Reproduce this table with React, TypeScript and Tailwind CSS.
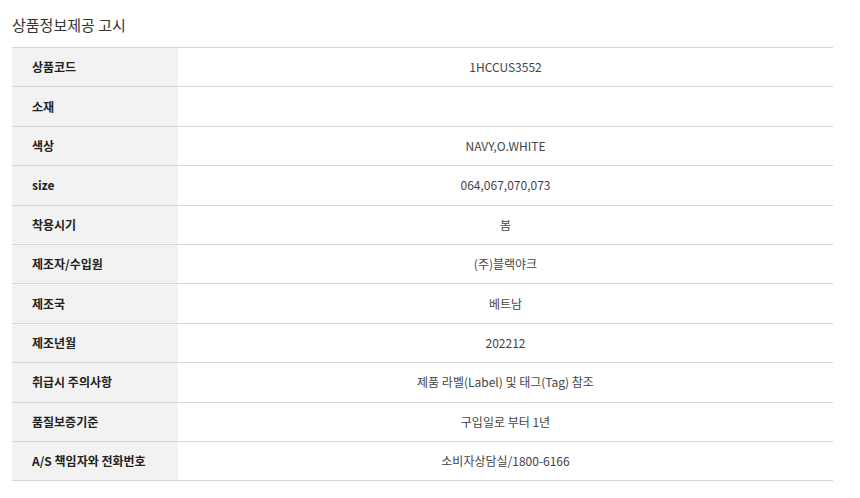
const rows: [string, string][] = [
  ["상품코드", "1HCCUS3552"],
  ["소재", ""],
  ["색상", "NAVY,O.WHITE"],
  ["size", "064,067,070,073"],
  ["착용시기", "봄"],
  ["제조자/수입원", "(주)블랙야크"],
  ["제조국", "베트남"],
  ["제조년월", "202212"],
  ["취급시 주의사항", "제품 라벨(Label) 및 태그(Tag) 참조"],
  ["품질보증기준", "구입일로 부터 1년"],
  ["A/S 책임자와 전화번호", "소비자상담실/1800-6166"],
];

export default function App() {
  return (
    <div
      className="w-[860px] h-[498px] bg-white pl-3 pr-[27px]"
      style={{ fontFamily: '"Noto Sans CJK KR", "Noto Sans", sans-serif' }}
    >
      <h2 className="pt-[13px] h-[47px] text-[15px] leading-[24px] text-[#333]">
        상품정보제공 고시
      </h2>
      <div className="border-t border-[#d6d6d6]">
        {rows.map(([label, value]) => (
          <div key={label} className="flex h-[39.4px] border-b border-[#d6d6d6]">
            <div className="w-[166px] bg-[#f2f2f2] pl-5 flex items-center text-[12px] font-bold text-[#222]">
              {label}
            </div>
            <div className="flex-1 flex items-center justify-center text-[12px] text-[#444]">
              {value}
            </div>
          </div>
        ))}
      </div>
    </div>
  );
}
